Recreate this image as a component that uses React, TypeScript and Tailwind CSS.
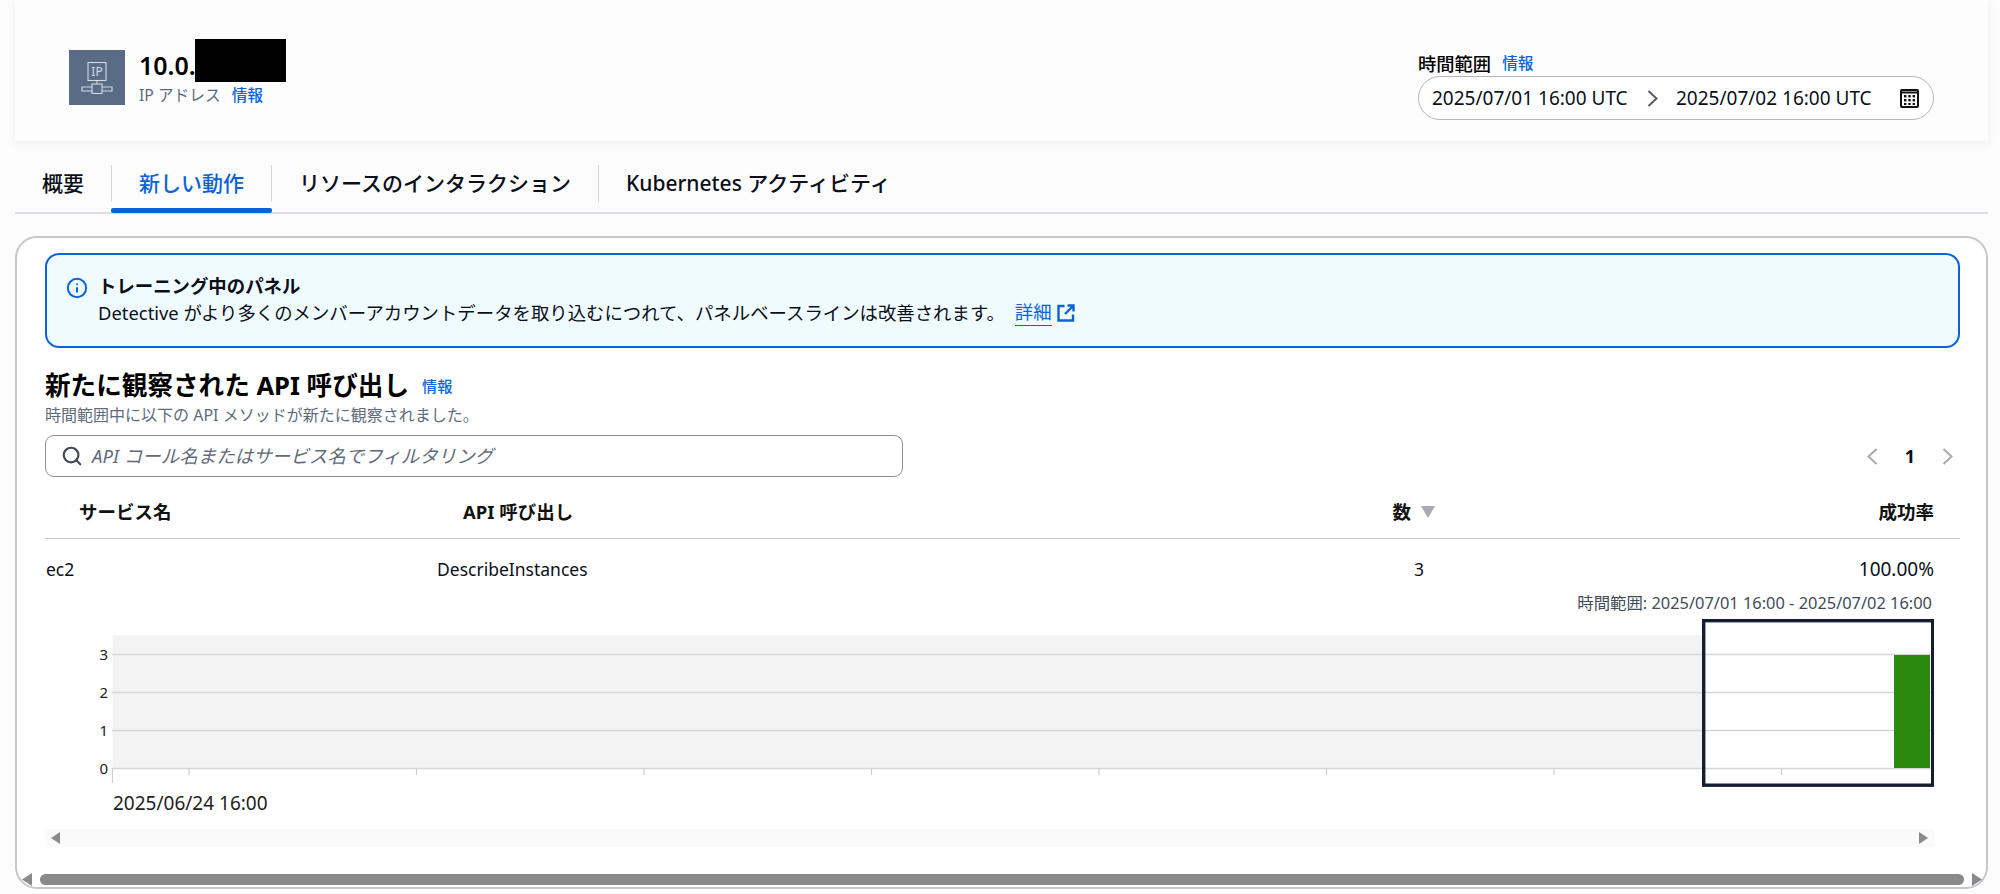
import { Info, Search } from "lucide-react";

const ticks = [189, 416.5, 644, 871.5, 1099, 1326.5, 1554, 1781.5];
const gridLines = [
  { label: "3", y: 654.5 },
  { label: "2", y: 692.5 },
  { label: "1", y: 730.5 },
  { label: "0", y: 768.5 },
];

function IpIcon() {
  return (
    <div className="flex h-[55px] w-[56px] shrink-0 items-center justify-center bg-[#5a6b86]">
      <svg width="32" height="32" viewBox="0 0 32 32" fill="none" stroke="#d5dae3" strokeWidth="1.1">
        <rect x="7" y="0.5" width="18" height="18" />
        <text x="16" y="14" textAnchor="middle" fontSize="12" fill="#d5dae3" stroke="none">
          IP
        </text>
        <path d="M16 18.5v3.5" />
        <rect x="11" y="22" width="10" height="9.5" />
        <path d="M11 25H1v4h10M21 25h10v4H21" />
      </svg>
    </div>
  );
}

function CalendarIcon() {
  return (
    <svg width="19" height="19" viewBox="0 0 19 19" className="text-[#111]">
      <rect x="1" y="1" width="17" height="17" rx="1" fill="none" stroke="currentColor" strokeWidth="2" />
      <path d="M1 3.5h17" stroke="currentColor" strokeWidth="2" />
      <g fill="currentColor">
        <rect x="4" y="6" width="2.4" height="2.4" />
        <rect x="8.3" y="6" width="2.4" height="2.4" />
        <rect x="12.6" y="6" width="2.4" height="2.4" />
        <rect x="4" y="10" width="2.4" height="2.4" />
        <rect x="8.3" y="10" width="2.4" height="2.4" />
        <rect x="12.6" y="10" width="2.4" height="2.4" />
        <rect x="4" y="14" width="2.4" height="2" />
        <rect x="8.3" y="14" width="2.4" height="2" />
        <rect x="12.6" y="14" width="2.4" height="2" />
      </g>
    </svg>
  );
}

function ExternalIcon() {
  return (
    <svg width="18" height="18" viewBox="0 0 18 18" fill="none" stroke="#0a64d8" strokeWidth="2.4">
      <path d="M7.5 2H1.5v14.5H16V10.5" />
      <path d="M10.5 1.5h6v6M16.5 1.5 8 10" />
    </svg>
  );
}

function Chevron({ dir, color }: { dir: "left" | "right"; color: string }) {
  return (
    <svg width="11" height="17" viewBox="0 0 11 17" fill="none" stroke={color} strokeWidth="2" className="shrink-0">
      <path d={dir === "right" ? "M1.5 1l8 7.5-8 7.5" : "M9.5 1l-8 7.5 8 7.5"} />
    </svg>
  );
}

function Tab({ label, active }: { label: string; active?: boolean }) {
  return (
    <div
      className={
        active
          ? "relative flex h-[37px] items-center border-r border-[#d5d5dd] px-[27px] text-[#0a64d8]"
          : "relative flex h-[37px] items-center border-r border-[#d5d5dd] px-[27px]"
      }
    >
      {label}
      {active && <div className="absolute -bottom-[11px] -left-px -right-px h-[5px] rounded-[2px] bg-[#0a64d8]" />}
    </div>
  );
}

function Chart() {
  return (
    <svg width="1889" height="196" viewBox="45 619 1889 196" className="block">
      <rect x="112.5" y="635" width="1590" height="133" fill="#f3f3f3" />
      {gridLines.map((g) => (
        <g key={g.label}>
          <path d={`M112 ${g.y}H1932`} stroke="#d6d6d6" strokeWidth="1.5" />
          <text x="108" y={g.y + 5} textAnchor="end" fontSize="15" fill="#222">
            {g.label}
          </text>
        </g>
      ))}
      <path d="M112.5 768v15" stroke="#d0d0d0" strokeWidth="1.2" />
      {ticks.map((t) => (
        <path key={t} d={`M${t} 768v7`} stroke="#cfcfcf" strokeWidth="1.2" />
      ))}
      <rect x="1894" y="655" width="36" height="113" fill="#2b8a0e" />
      <rect x="1703.7" y="620.7" width="229" height="164.5" fill="none" stroke="#161d33" strokeWidth="3.4" />
      <text x="113" y="810" fontSize="19" fill="#222">
        2025/06/24 16:00
      </text>
    </svg>
  );
}

export default function App() {
  return (
    <div className="h-[894px] w-[2000px] overflow-hidden bg-[#fcfcfd] pl-[15px] pr-[12px] font-['Noto_Sans','Noto_Sans_CJK_JP',sans-serif] text-[#0b0f19]">
      {/* header */}
      <div className="flex h-[141px] items-start justify-between bg-[#fdfdfe] pl-[54px] pr-[54px] shadow-[0_2px_10px_rgba(0,0,0,0.06)]">
        <div className="flex items-start gap-[14px] pt-[50px]">
          <IpIcon />
          <div className="-mt-[2px]">
            <div className="relative h-[34px] text-[25px] leading-[34px] font-semibold text-black">
              10.0.
              <div className="absolute -top-[9px] left-[56px] h-[43px] w-[91px] bg-black" />
            </div>
            <div className="mt-[3px] flex items-center gap-[11px] text-[15.7px] leading-5 text-[#5f6b7a]">
              IP アドレス <span className="font-medium text-[#0a64d8]">情報</span>
            </div>
          </div>
        </div>
        <div className="pt-[51px]">
          <div className="flex h-[25px] items-center gap-[11px] text-[18.3px] font-medium text-black">
            時間範囲 <span className="text-[15.7px] text-[#0a64d8]">情報</span>
          </div>
          <div className="flex h-[44px] w-[516px] items-center rounded-full border border-[#b5b5bd] bg-white pl-[13px] text-[19px]">
            <span className="w-[197px] whitespace-nowrap">2025/07/01 16:00 UTC</span>
            <span className="ml-[18px]">
              <Chevron dir="right" color="#555b68" />
            </span>
            <span className="ml-[18px] w-[197px] whitespace-nowrap">2025/07/02 16:00 UTC</span>
            <div className="ml-[27px]">
              <CalendarIcon />
            </div>
          </div>
        </div>
      </div>

      {/* tabs */}
      <div className="flex h-[73px] items-start border-b-2 border-[#dcdce2] pt-[24px] text-[21px] font-medium">
        <Tab label="概要" />
        <Tab label="新しい動作" active />
        <Tab label="リソースのインタラクション" />
        <div className="flex h-[37px] items-center px-[27px]">Kubernetes アクティビティ</div>
      </div>

      {/* panel */}
      <div className="mt-[22px] flex h-[653px] flex-col rounded-[22px] border-2 border-[#c6c6cd] bg-white pl-[28px] pr-[26px] pt-[15px]">
        <div className="flex h-[95px] items-start gap-[10px] rounded-[14px] border-2 border-[#0a64d8] bg-[#f0fbff] pl-[19px] pt-[18px] text-[18.4px]">
          <Info className="mt-[4px] h-[22px] w-[22px] text-[#0a64d8]" strokeWidth={2.2} />
          <div className="leading-[26px]">
            <div className="font-bold">トレーニング中のパネル</div>
            <div className="flex items-center">
              Detective がより多くのメンバーアカウントデータを取り込むにつれて、パネルベースラインは改善されます。
              <span className="ml-[10px] border-b border-[#0a64d8] text-[#0a64d8]">詳細</span>
              <span className="ml-[5px]">
                <ExternalIcon />
              </span>
            </div>
          </div>
        </div>

        <div className="mt-[20px] flex items-center gap-[13px]">
          <h2 className="text-[25.6px] leading-[36px] font-bold text-black">新たに観察された API 呼び出し</h2>
          <span className="text-[15.2px] font-medium text-[#0a64d8]">情報</span>
        </div>
        <div className="mt-[1px] text-[16px] leading-[20px] text-[#5f6b7a]">時間範囲中に以下の API メソッドが新たに観察されました。</div>

        <div className="mt-[10px] flex items-center justify-between">
          <div className="flex h-[42px] w-[858px] items-center gap-[9px] rounded-[9px] border border-[#8d8d96] pl-[15px] text-[18.5px] text-[#5f6b7a] italic">
            <Search className="h-[22px] w-[22px] text-[#444b58]" strokeWidth={2.4} />
            API コール名またはサービス名でフィルタリング
          </div>
          <div className="flex items-center gap-[27px] pr-[7px] text-[18px] font-bold">
            <Chevron dir="left" color="#a9a9b2" />
            <span>1</span>
            <Chevron dir="right" color="#a9a9b2" />
          </div>
        </div>

        <div className="mt-[15px] grid h-[47px] grid-cols-[392px_998px_1fr] items-center border-b border-[#c6c6cd] pr-[26px] pb-[7px] text-[18.5px] font-bold text-[#111]">
          <div className="pl-[34px]">サービス名</div>
          <div className="flex justify-between pl-[26px]">
            <span>API 呼び出し</span>
            <span className="flex items-center gap-[10px]">
              数
              <svg width="14" height="12" viewBox="0 0 14 12">
                <path d="M0 0h14L7 12z" fill="#a9a9b2" />
              </svg>
            </span>
          </div>
          <div className="text-right">成功率</div>
        </div>
        <div className="grid h-[61px] grid-cols-[392px_987px_1fr] items-center pr-[26px] text-[17.5px]">
          <div className="pl-[1px]">ec2</div>
          <div className="flex justify-between">
            <span>DescribeInstances</span>
            <span>3</span>
          </div>
          <div className="text-right text-[19px]">100.00%</div>
        </div>
        <div className="-mt-[7px] h-[20px] pr-[28px] text-right text-[16.4px] leading-[20px] text-[#444b58]">
          時間範囲: 2025/07/01 16:00 - 2025/07/02 16:00
        </div>

        <div className="mt-[6px]">
          <Chart />
        </div>

        <div className="mt-[14px] flex h-[18px] w-[1889px] items-center justify-between bg-[#fafafa] px-[6px]">
          <svg width="9" height="12" viewBox="0 0 9 12">
            <path d="M9 0v12L0 6z" fill="#8a8a8a" />
          </svg>
          <svg width="9" height="12" viewBox="0 0 9 12">
            <path d="M0 0v12l9-6z" fill="#8a8a8a" />
          </svg>
        </div>

        <div className="-ml-[23px] -mr-[22px] mt-[26px] flex items-center gap-[8px]">
          <svg width="10" height="13" viewBox="0 0 10 13" className="shrink-0">
            <path d="M10 0v13L0 6.5z" fill="#8a8a8a" />
          </svg>
          <div className="h-[11px] flex-1 rounded-full bg-[#8a8a8a]" />
          <svg width="10" height="13" viewBox="0 0 10 13" className="shrink-0">
            <path d="M0 0v13l10-6.5z" fill="#8a8a8a" />
          </svg>
        </div>
      </div>
    </div>
  );
}
